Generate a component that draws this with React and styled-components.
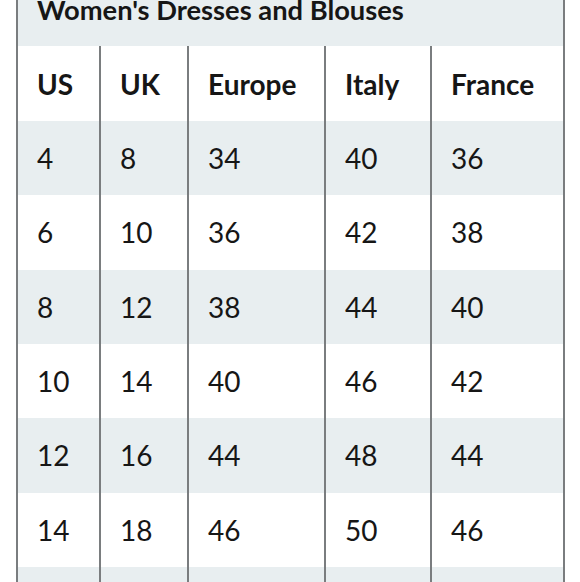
import React from 'react'
import styled, { createGlobalStyle } from 'styled-components'

const GlobalStyle = createGlobalStyle`
    html, body {
        margin: 0;
        padding: 0;
        background: #ffffff;
        overflow: hidden;
    }
    * {
        box-sizing: border-box;
    }
`

const Page = styled.div`
    width: 580px;
    height: 582px;
    padding-left: 16px;
    font-family: Lato, "Open Sans", sans-serif;
    color: #161616;
`

const Chart = styled.div`
    width: 549px;
`

const TitleBar = styled.div`
    height: 46px;
    display: flex;
    align-items: flex-end;
    padding: 0 20px 20px 19px;
    background: #e8eef0;
    border-left: 2px solid #7a7d7f;
    border-right: 2px solid #7a7d7f;
    font-size: 27.3px;
    line-height: 33px;
    font-weight: 700;
    white-space: nowrap;
`

const Row = styled.div`
    display: grid;
    grid-template-columns: 83px 88px 137px 106px 135px;
    height: ${props => props.head ? '75px' : '74.33px'};
    background: ${props => props.shaded ? '#e8eef0' : '#ffffff'};
`

const Cell = styled.div`
    display: flex;
    align-items: center;
    padding-left: 19px;
    border-left: 2px solid #7a7d7f;
    font-size: 28px;
    line-height: 34px;
    font-weight: ${props => props.head ? 700 : 400};
    white-space: nowrap;

    &:last-child {
        border-right: 2px solid #7a7d7f;
    }
`

const headers = ['US', 'UK', 'Europe', 'Italy', 'France']

const sizes = [
    ['4', '8', '34', '40', '36'],
    ['6', '10', '36', '42', '38'],
    ['8', '12', '38', '44', '40'],
    ['10', '14', '40', '46', '42'],
    ['12', '16', '44', '48', '44'],
    ['14', '18', '46', '50', '46'],
    ['', '', '', '', ''],
]

const App = () => {
  return (
    <Page>
        <GlobalStyle/>
        <Chart>
            <TitleBar>Women's Dresses and Blouses</TitleBar>
            <Row head>
                {headers.map(h => <Cell head key={h}>{h}</Cell>)}
            </Row>
            {sizes.map((row, i) => (
                <Row key={i} shaded={i % 2 === 0}>
                    {row.map((v, j) => <Cell key={j}>{v}</Cell>)}
                </Row>
            ))}
        </Chart>
    </Page>
  )
}

export default App
